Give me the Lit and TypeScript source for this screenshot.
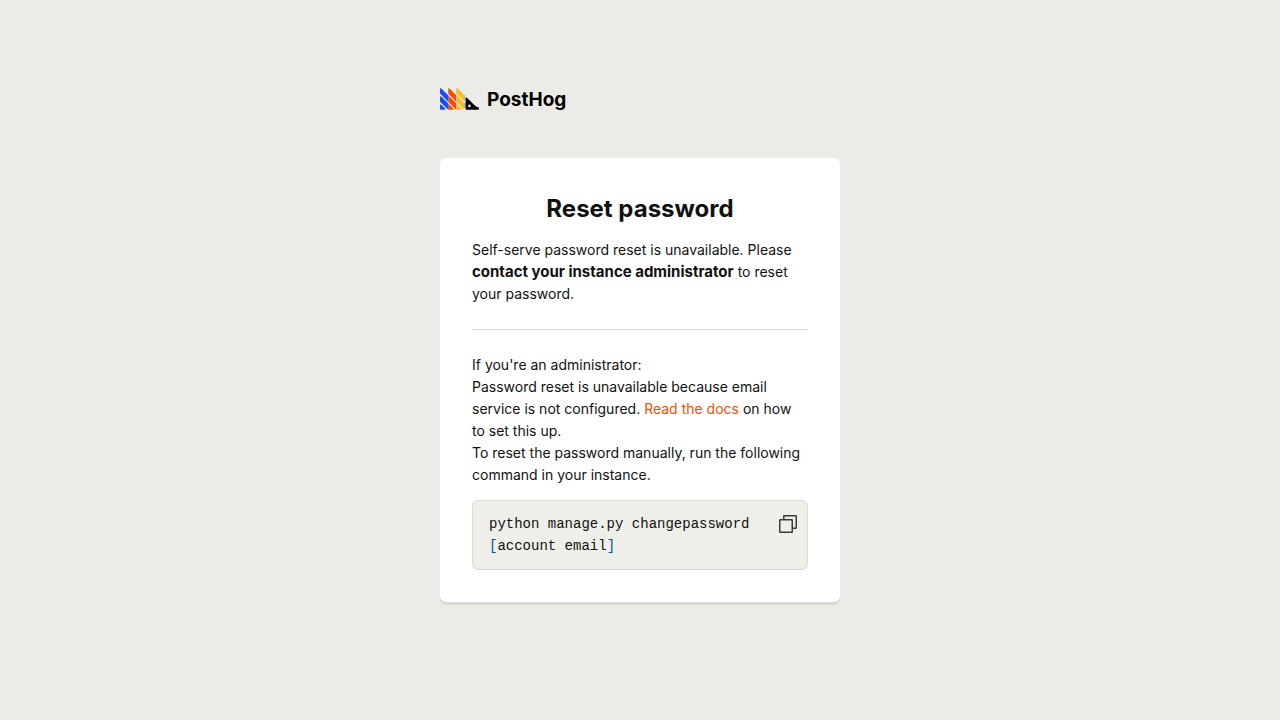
import { LitElement, html, css, svg } from "lit";
import { customElement } from "lit/decorators.js";

const MARK =
  "M9.854 14.5 5 9.647.854 5.5A.5.5 0 0 0 0 5.854V8.44a.5.5 0 0 0 .146.353L5 13.647l.147.146L9.854 18.5l.146.147v-.049c.065.03.134.049.207.049h2.586a.5.5 0 0 0 .353-.854L9.854 14.5zm0-5-4-4a.487.487 0 0 0-.409-.144.515.515 0 0 0-.356.21.493.493 0 0 0-.089.288V8.44a.5.5 0 0 0 .147.353l9 9a.5.5 0 0 0 .853-.354v-2.585a.5.5 0 0 0-.146-.354l-5-5zm1-4a.5.5 0 0 0-.854.354V8.44a.5.5 0 0 0 .147.353l4 4a.5.5 0 0 0 .853-.354V9.854a.5.5 0 0 0-.146-.354l-4-4zm12.647 11.515a3.863 3.863 0 0 1-2.232-1.1l-4.708-4.707a.5.5 0 0 0-.854.354v6.585a.5.5 0 0 0 .5.5H23.5a.5.5 0 0 0 .5-.5v-.6c0-.276-.225-.497-.499-.532zm-5.394.032a.8.8 0 1 1 0-1.6.8.8 0 0 1 0 1.6zM.854 15.5a.5.5 0 0 0-.854.354v2.293a.5.5 0 0 0 .5.5h2.293c.222 0 .39-.135.462-.309a.493.493 0 0 0-.109-.545L.854 15.5zM5 14.647.854 10.5a.5.5 0 0 0-.854.353v2.586a.5.5 0 0 0 .146.353L4.854 18.5 5 18.647h2.793a.5.5 0 0 0 .353-.854L5 14.647z";

const BANDS = [
  { id: "blue", x: 0, width: 5, fill: "#1d4aff" },
  { id: "red", x: 5, width: 5, fill: "#f54e00" },
  { id: "yellow", x: 10, width: 5, fill: "#f9bd2b" },
  { id: "black", x: 15, width: 9, fill: "#000" },
];

@customElement("app-root")
export class AppRoot extends LitElement {
  static styles = css`
    :host {
      display: block;
      color: #111;
      font: 14px/22px Inter, sans-serif;
    }
    * {
      box-sizing: border-box;
    }
    .page {
      min-height: 100vh;
      display: flex;
      flex-direction: column;
      align-items: center;
      justify-content: center;
      padding: 16px 16px 43px;
      background: #ebece8;
    }
    .column {
      width: 100%;
      max-width: 400px;
      display: flex;
      flex-direction: column;
      gap: 48px;
    }
    .brand {
      display: flex;
      align-items: flex-end;
      gap: 8px;
      color: #000;
      font-weight: 700;
      font-size: 19px;
      line-height: 20px;
      text-decoration: none;
    }
    .mark {
      width: 39px;
      height: 22px;
      flex: none;
    }
    .card {
      padding: 32px;
      border-radius: 6px;
      background: #fff;
      box-shadow: 0 3px 0 #dadbd4;
      margin-bottom: 3px;
    }
    .title {
      margin: 0 0 11px;
      font-size: 24px;
      line-height: 38px;
      font-weight: 700;
      text-align: center;
    }
    .text {
      margin: 0;
    }
    .strong {
      font-size: 15px;
      line-height: 20px;
      font-weight: 700;
    }
    .rule {
      margin: 24px 0;
      border: 0;
      border-top: 1px solid #dadbd2;
    }
    .link {
      color: #f54e00;
      text-decoration: none;
    }
    .snippet {
      display: flex;
      align-items: flex-start;
      margin-top: 14px;
      padding: 12px 9px 12px 16px;
      border: 1px solid #dadbd2;
      border-radius: 6px;
      background: #eeefe9;
    }
    .code {
      flex: 1;
      margin: 0;
      white-space: pre-wrap;
      font: 14px/22px "Liberation Mono", monospace;
    }
    .bracket {
      color: #0451a5;
    }
    .copy {
      display: flex;
      padding: 0;
      border: 0;
      background: none;
      color: #3b3b3a;
      cursor: pointer;
    }
    .icon {
      width: 20px;
      height: 22px;
    }
  `;

  render() {
    return html`
      <div class="page">
        <div class="column">
          <a class="brand" href="#">
            <svg class="mark" viewBox="0 5.35 24 13.3" aria-hidden="true">
              ${BANDS.map(
                (b) => svg`
                  <clipPath id=${b.id}><rect x=${b.x} y="5" width=${b.width} height="14" /></clipPath>
                  <path d=${MARK} fill=${b.fill} clip-path="url(#${b.id})" />
                `
              )}
            </svg>
            <span>PostHog</span>
          </a>
          <main class="card">
            <h1 class="title">Reset password</h1>
            <p class="text">
              Self-serve password reset is unavailable. Please
              <strong class="strong">contact your instance administrator</strong> to reset
              your password.
            </p>
            <hr class="rule" />
            <p class="text">If you're an administrator:</p>
            <p class="text">
              Password reset is unavailable because email service is not configured.
              <a class="link" href="#">Read the docs</a> on how to set this up.
            </p>
            <p class="text">
              To reset the password manually, run the following command in your instance.
            </p>
            <div class="snippet">
              <pre class="code"><code class="code">python manage.py changepassword <span class="bracket">[</span>account email<span class="bracket">]</span></code></pre>
              <button class="copy" type="button" aria-label="Copy command">
                <svg class="icon" viewBox="0 0 20 22" fill="none" stroke="currentColor" stroke-width="1.5" stroke-linejoin="round">
                  <rect x="1.75" y="6.75" width="12.5" height="12.5" rx="0.5" />
                  <path d="M5.75 6.75V3.25a.5.5 0 0 1 .5-.5H17.75a.5.5 0 0 1 .5.5V14.75a.5.5 0 0 1-.5.5H14.25" />
                </svg>
              </button>
            </div>
          </main>
        </div>
      </div>
    `;
  }
}
